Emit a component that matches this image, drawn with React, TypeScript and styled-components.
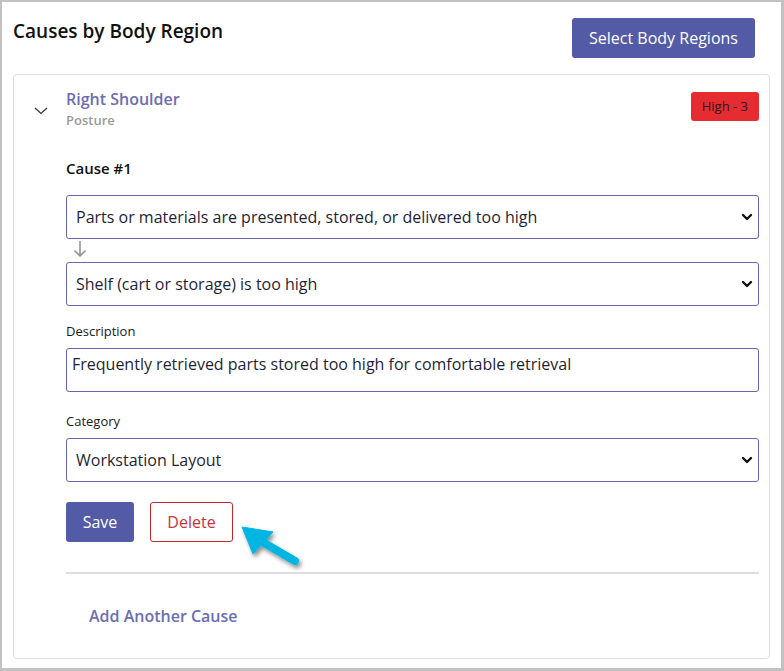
import React from "react";
import styled, { createGlobalStyle } from "styled-components";

const Global = createGlobalStyle`
  html, body { margin: 0; padding: 0; background: #fff; }
  body { font-family: "Open Sans", "Noto Sans", Arial, sans-serif; color: #1a1a1a; }
  * { box-sizing: border-box; }
`;

const Frame = styled.div`
  width: 784px;
  height: 671px;
  border: 2px solid #c2c2c2;
  border-right-width: 3px;
  border-bottom-width: 3px;
  padding: 16px 11px 0 11px;
  background: #fff;
  display: flex;
  flex-direction: column;
`;

const Header = styled.div`
  display: flex;
  justify-content: space-between;
  align-items: flex-start;
  height: 56px;
`;

const Title = styled.h2`
  margin: 0;
  font-size: 19px;
  font-weight: 600;
  line-height: 26px;
  color: #111;
`;

const PrimaryButton = styled.button<{ $w?: number; $h?: number }>`
  background: #535ba6;
  color: #fff;
  border: none;
  border-radius: 3px;
  font-family: inherit;
  font-size: 16px;
  font-weight: 400;
  height: ${(p) => p.$h ?? 40}px;
  width: ${(p) => p.$w ?? 100}px;
  padding: 0;
  cursor: pointer;
`;

const HeaderButton = styled(PrimaryButton)`
  margin-right: 15px;
`;

const Card = styled.div`
  border: 1px solid #dddbea;
  border-radius: 4px;
  height: 585px;
  display: grid;
  grid-template-columns: 52px 1fr;
  padding: 13px 10px 0 0;
`;

const ChevronCell = styled.div`
  padding: 10px 0 0 20px;
  color: #333;
`;

const Body = styled.div`
  display: flex;
  flex-direction: column;
`;

const RegionRow = styled.div`
  display: flex;
  justify-content: space-between;
  align-items: flex-start;
`;

const RegionName = styled.div`
  font-size: 16px;
  font-weight: 600;
  line-height: 22px;
  color: #6b6eb0;
`;

const RegionSub = styled.div`
  font-size: 13px;
  font-weight: 600;
  line-height: 20px;
  color: #9a9a9a;
`;

const Badge = styled.span`
  margin-top: 4px;
  background: #e52c33;
  color: #2a1616;
  font-size: 13px;
  line-height: 29px;
  height: 29px;
  padding: 0 11px;
  border-radius: 3px;
`;

const CauseTitle = styled.div`
  margin-top: 27px;
  font-size: 15px;
  font-weight: 600;
  line-height: 22px;
  color: #111;
`;

const SelectWrap = styled.div<{ $mt: number }>`
  position: relative;
  margin-top: ${(p) => p.$mt}px;
  height: 44px;
`;

const Select = styled.select`
  appearance: none;
  -webkit-appearance: none;
  width: 100%;
  height: 44px;
  border: 1px solid #6466b4;
  border-radius: 3px;
  background: #fff;
  padding: 0 30px 0 9px;
  font-family: inherit;
  font-size: 16px;
  color: #1f1f36;
`;

const Caret = styled.svg`
  position: absolute;
  right: 6px;
  top: 17px;
  pointer-events: none;
`;

const Connector = styled.div`
  height: 23px;
  padding-left: 7px;
  padding-top: 1px;
`;

const Label = styled.div<{ $mt: number }>`
  margin-top: ${(p) => p.$mt}px;
  font-size: 13px;
  line-height: 18px;
  color: #1a1a1a;
`;

const TextArea = styled.textarea`
  margin-top: 8px;
  width: 100%;
  height: 44px;
  border: 1px solid #6466b4;
  border-radius: 3px;
  resize: none;
  padding: 4px 5px;
  font-family: inherit;
  font-size: 16px;
  line-height: 22px;
  color: #1f1f36;
  display: block;
`;

const ButtonRow = styled.div`
  position: relative;
  display: flex;
  gap: 16px;
  margin-top: 20px;
  height: 40px;
`;

const DangerButton = styled.button`
  width: 83px;
  height: 40px;
  background: #fff;
  border: 1px solid #c8262e;
  border-radius: 3px;
  color: #c8323a;
  font-family: inherit;
  font-size: 16px;
  padding: 0;
  cursor: pointer;
`;

const Pointer = styled.svg`
  position: absolute;
  left: 173px;
  top: 22px;
  overflow: visible;
`;

const Divider = styled.hr`
  margin: 30px 0 0 0;
  border: none;
  height: 2px;
  background: #dedce9;
`;

const LinkButton = styled.button`
  align-self: flex-start;
  margin-top: 22px;
  margin-left: 0;
  background: none;
  border: none;
  padding: 8px 23px;
  font-family: inherit;
  font-size: 16px;
  font-weight: 600;
  line-height: 24px;
  color: #6b6eb0;
  cursor: pointer;
`;

const SelectField: React.FC<{ mt: number; value: string }> = ({ mt, value }) => (
  <SelectWrap $mt={mt}>
    <Select defaultValue={value}>
      <option>{value}</option>
    </Select>
    <Caret width="12" height="10" viewBox="0 0 12 10">
      <path d="M2 3 L6 7 L10 3" fill="none" stroke="#111" strokeWidth="2.4" strokeLinecap="round" strokeLinejoin="round" />
    </Caret>
  </SelectWrap>
);

export default function App() {
  return (
    <>
      <Global />
      <Frame>
        <Header>
          <Title>Causes by Body Region</Title>
          <HeaderButton $w={183} $h={40}>Select Body Regions</HeaderButton>
        </Header>
        <Card>
          <ChevronCell>
            <svg width="14" height="8" viewBox="0 0 14 8">
              <path d="M1 1 L7 6.5 L13 1" fill="none" stroke="#333" strokeWidth="1.2" />
            </svg>
          </ChevronCell>
          <Body>
            <RegionRow>
              <div>
                <RegionName>Right Shoulder</RegionName>
                <RegionSub>Posture</RegionSub>
              </div>
              <Badge>High - 3</Badge>
            </RegionRow>
            <CauseTitle>Cause #1</CauseTitle>
            <SelectField mt={16} value="Parts or materials are presented, stored, or delivered too high" />
            <Connector>
              <svg width="14" height="18" viewBox="0 0 14 18">
                <path d="M7 1 V16 M1.5 10.5 L7 16 L12.5 10.5" fill="none" stroke="#8d8d96" strokeWidth="1.5" />
              </svg>
            </Connector>
            <SelectField mt={0} value="Shelf (cart or storage) is too high" />
            <Label $mt={16}>Description</Label>
            <TextArea defaultValue="Frequently retrieved parts stored too high for comfortable retrieval" />
            <Label $mt={20}>Category</Label>
            <SelectField mt={8} value="Workstation Layout" />
            <ButtonRow>
              <PrimaryButton $w={68} $h={40}>Save</PrimaryButton>
              <DangerButton>Delete</DangerButton>
              <Pointer width="64" height="44" viewBox="0 0 64 44">
                <defs>
                  <filter id="sh" x="-30%" y="-30%" width="160%" height="160%">
                    <feDropShadow dx="2" dy="3" stdDeviation="2" floodColor="#000" floodOpacity="0.45" />
                  </filter>
                </defs>
                <g filter="url(#sh)" fill="#00b5e2" stroke="#00b5e2">
                  <path d="M3 3 L34 8 L14 30 Z" strokeWidth="1" strokeLinejoin="round" />
                  <path d="M20 16 L56 37" strokeWidth="8" strokeLinecap="round" fill="none" />
                </g>
              </Pointer>
            </ButtonRow>
            <Divider />
            <LinkButton>Add Another Cause</LinkButton>
          </Body>
        </Card>
      </Frame>
    </>
  );
}
